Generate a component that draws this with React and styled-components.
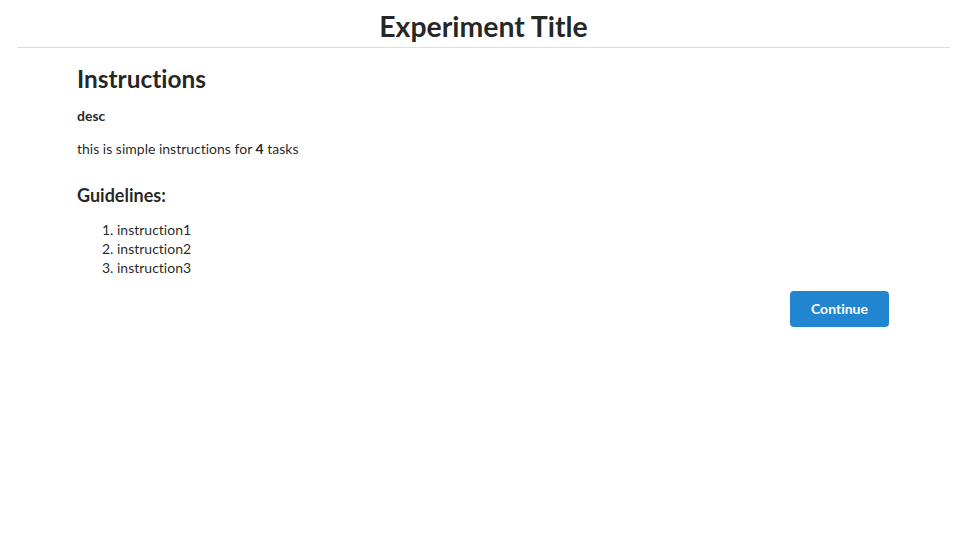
import React from "react";
import styled, { createGlobalStyle } from "styled-components";

const Global = createGlobalStyle`
  html, body { margin: 0; padding: 0; background: #ffffff; }
  body {
    font-family: Lato, "Open Sans", "Liberation Sans", sans-serif;
    font-size: 14px;
    line-height: 1.4285em;
    color: rgba(0, 0, 0, 0.87);
    font-variant-ligatures: none;
  }
`;

const Page = styled.div`
  width: 970px;
  min-height: 560px;
`;

const Header = styled.header`
  margin: 0 20px 0 17px;
  padding: 8px 0 3px;
  border-bottom: 1px solid rgba(34, 36, 38, 0.15);
  text-align: center;
`;

const Title = styled.h1`
  margin: 0;
  font-size: 28.4px;
  line-height: 36px;
  font-weight: 700;
  color: rgba(0, 0, 0, 0.87);
`;

const Content = styled.main`
  margin: 0 81px 0 77px;
  padding-top: 14px;
  display: flex;
  flex-direction: column;
`;

const SectionTitle = styled.h2`
  margin: 0;
  font-size: 24.4px;
  line-height: 33px;
  font-weight: 700;
  color: rgba(0, 0, 0, 0.87);
`;

const Desc = styled.p`
  margin: 12px 0 0;
  font-size: 14px;
  font-weight: 700;
  line-height: 18px;
`;

const Text = styled.p`
  margin: 14px 0 0;
  font-size: 14px;
  line-height: 20px;
`;

const SubTitle = styled.h3`
  margin: 25px 0 0;
  font-size: 18px;
  line-height: 23px;
  font-weight: 700;
  color: rgba(0, 0, 0, 0.87);
`;

const List = styled.ol`
  margin: 13px 0 0;
  padding-left: 40px;
  font-size: 14px;
  line-height: 19px;
`;

const Actions = styled.div`
  display: flex;
  justify-content: flex-end;
  margin-top: 14px;
`;

const Button = styled.button`
  width: 99px;
  height: 36px;
  border: none;
  border-radius: 4px;
  background: #2185d0;
  color: #ffffff;
  font-family: Lato, "Open Sans", "Liberation Sans", sans-serif;
  font-size: 14px;
  font-weight: 700;
  font-variant-ligatures: none;
  cursor: pointer;
  padding: 0 0 2px;
`;

export default function App() {
  return (
    <Page>
      <Global />
      <Header>
        <Title>Experiment Title</Title>
      </Header>
      <Content>
        <SectionTitle>Instructions</SectionTitle>
        <Desc>desc</Desc>
        <Text>
          this is simple instructions for <b>4</b> tasks
        </Text>
        <SubTitle>Guidelines:</SubTitle>
        <List>
          <li>instruction1</li>
          <li>instruction2</li>
          <li>instruction3</li>
        </List>
        <Actions>
          <Button>Continue</Button>
        </Actions>
      </Content>
    </Page>
  );
}
